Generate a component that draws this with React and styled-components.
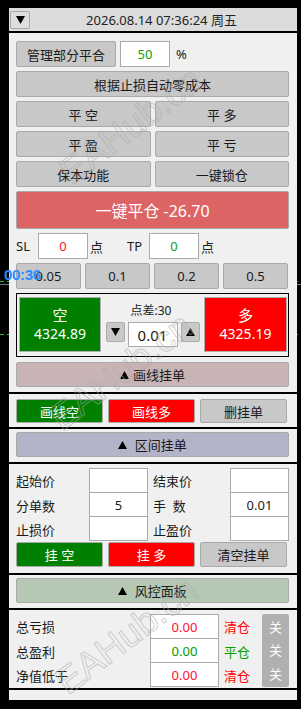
import React from 'react';
import styled, { createGlobalStyle } from 'styled-components';

const GlobalStyle = createGlobalStyle`
  html, body { margin: 0; padding: 0; background: #000; }
  body { font-family: "Noto Sans", "Noto Sans CJK SC", sans-serif; }
  * { box-sizing: border-box; }
`;

const FONT = `"Noto Sans", "Noto Sans CJK SC", sans-serif`;

const Page = styled.div`
  position: relative;
  width: 301px;
  height: 709px;
  background: #000;
  padding: 8px 0 0 9px;
  overflow: hidden;
`;

const ChartLine = styled.div`
  position: absolute;
  left: 0;
  right: 0;
  top: ${p => p.$top}px;
  height: 1px;
  background: ${p => p.$dashed
    ? `repeating-linear-gradient(90deg, ${p.$color} 0 4px, transparent 4px 7px)`
    : p.$color};
`;

const TimeTag = styled.div`
  position: absolute;
  left: 4px;
  top: 266px;
  z-index: 5;
  font-family: "Liberation Sans", sans-serif;
  font-weight: bold;
  font-size: 15px;
  color: #2a8cff;
  letter-spacing: -0.3px;
`;

const Panel = styled.div`
  position: relative;
  z-index: 1;
  width: 288px;
  display: flex;
  flex-direction: column;
  font-family: ${FONT};
  font-size: 13px;
  color: #1a1a1a;
`;

const Header = styled.div`
  height: 23px;
  background: #dcdcdc;
  display: flex;
  align-items: center;
  padding-left: 1px;
`;

const Toggle = styled.div`
  width: 20px;
  height: 18px;
  border: 1px solid #a9a9a9;
  border-radius: 2px;
  background: #dedede;
  display: flex;
  align-items: center;
  justify-content: center;
`;

const DateText = styled.div`
  flex: 1;
  text-align: center;
  font-size: 13px;
  padding-right: 4px;
  color: #222;
`;

const Rule = styled.div`
  height: 2px;
  background: #000;
`;

const Section = styled.div`
  background: #f0f0f0;
  padding: ${p => p.$pad};
  display: flex;
  flex-direction: column;
  gap: ${p => p.$gap || 0}px;
  height: ${p => (p.$h ? `${p.$h}px` : 'auto')};
`;

const TONES = {
  gray: { bg: '#c8c8c8', fg: '#1a1a1a', bd: '#a9a9a9' },
  green: { bg: '#008000', fg: '#fff', bd: '#a9a9a9' },
  red: { bg: '#ff0000', fg: '#fff', bd: '#a9a9a9' },
  rose: { bg: '#dc6464', fg: '#fff', bd: '#a9a9a9' },
  pink: { bg: '#c8b4b4', fg: '#1a1a1a', bd: '#a9a9a9' },
  lilac: { bg: '#b4b4c8', fg: '#1a1a1a', bd: '#a9a9a9' },
  sage: { bg: '#b4c8b4', fg: '#1a1a1a', bd: '#a9a9a9' },
};

const Btn = styled.div`
  height: ${p => p.$h || 26}px;
  width: ${p => (p.$w ? `${p.$w}px` : 'auto')};
  background: ${p => TONES[p.$tone || 'gray'].bg};
  color: ${p => TONES[p.$tone || 'gray'].fg};
  border: 1px solid ${p => TONES[p.$tone || 'gray'].bd};
  border-radius: 2px;
  font-size: ${p => p.$fs || 13}px;
  display: flex;
  align-items: center;
  justify-content: center;
  gap: 4px;
  white-space: pre;
  flex-shrink: 0;
`;

const Row = styled.div`
  display: flex;
  align-items: center;
  gap: ${p => p.$gap || 0}px;
  margin-top: ${p => p.$mt || 0}px;
`;

const Grid = styled.div`
  display: grid;
  grid-template-columns: ${p => p.$cols};
  column-gap: ${p => p.$gap || 0}px;
  margin-top: ${p => p.$mt || 0}px;
`;

const Field = styled.div`
  width: ${p => p.$w}px;
  height: ${p => p.$h || 26}px;
  background: #fff;
  border: 1px solid #ababab;
  display: flex;
  align-items: center;
  justify-content: center;
  color: ${p => p.$color || '#1a1a1a'};
  font-size: ${p => p.$fs || 13}px;
  flex-shrink: 0;
`;

const Label = styled.span`
  width: ${p => (p.$w ? `${p.$w}px` : 'auto')};
  margin-left: ${p => p.$ml || 0}px;
  flex-shrink: 0;
  white-space: pre;
`;

const TradeBox = styled.div`
  height: 64px;
  border: 1px solid #000;
  padding: 3px 1px 3px 2px;
  display: flex;
  align-items: stretch;
`;

const PriceBox = styled.div`
  width: ${p => p.$w}px;
  height: 55px;
  background: ${p => (p.$side === 'sell' ? '#008000' : '#ff0000')};
  border: 1px solid #b0b0b0;
  color: #fff;
  display: flex;
  flex-direction: column;
  align-items: center;
  justify-content: center;
  gap: 1px;
`;

const Side = styled.span`
  font-size: 15px;
  line-height: 18px;
`;

const Price = styled.span`
  font-size: 14px;
  line-height: 18px;
`;

const Middle = styled.div`
  flex: 1;
  display: flex;
  flex-direction: column;
  align-items: center;
  padding-top: 6px;
  gap: 3px;
`;

const Spread = styled.div`
  font-size: 12px;
  line-height: 16px;
  padding-right: 3px;
`;

const Stepper = styled.div`
  display: flex;
  align-items: flex-start;
  gap: 3px;
`;

const StepBtn = styled.div`
  width: 19px;
  height: 20px;
  background: #c8c8c8;
  border: 1px solid #ababab;
  border-radius: 2px;
  display: flex;
  align-items: center;
  justify-content: center;
`;

const GridCell = styled.div`
  height: ${p => (p.$first ? 25 : 24)}px;
  display: flex;
  align-items: center;
  padding-left: ${p => p.$pl || 0}px;
  white-space: pre;
`;

const GridField = styled.div`
  height: ${p => (p.$first ? 25 : 24)}px;
  background: #fff;
  border: 1px solid #ababab;
  border-top-width: ${p => (p.$first ? 1 : 0)}px;
  display: flex;
  align-items: center;
  justify-content: center;
  color: ${p => p.$color || '#1a1a1a'};
`;

const Status = styled.div`
  height: ${p => (p.$first ? 25 : 24)}px;
  display: flex;
  align-items: center;
  padding-left: 5px;
  color: ${p => p.$color};
`;

const OffBox = styled.div`
  grid-column: 4;
  grid-row: 1 / span 3;
  background: #b0b0b0;
  border-radius: 2px;
  color: #fff;
  display: flex;
  flex-direction: column;
  justify-content: space-around;
  align-items: center;
  padding: 1px 0 2px;
`;

const Watermark = styled.div`
  position: absolute;
  left: ${p => p.$x}px;
  top: ${p => p.$y}px;
  transform: translate(-50%, -50%) rotate(-37deg);
  font-family: "Liberation Sans", sans-serif;
  font-size: 37px;
  color: transparent;
  -webkit-text-stroke: 1px rgba(170, 170, 170, 0.55);
  pointer-events: none;
  white-space: nowrap;
  z-index: 3;
`;

const Tri = ({ up, size = 9 }) => (
  <svg width={size} height={size - 1} viewBox="0 0 9 8">
    {up ? <path d="M4.5 0 L9 8 L0 8 Z" fill="#000" /> : <path d="M0 0 L9 0 L4.5 8 Z" fill="#000" />}
  </svg>
);

const risk = [
  { label: '总亏损', val: '#ff1030', st: '清仓', stc: '#ff0000' },
  { label: '总盈利', val: '#00a000', st: '平仓', stc: '#00a000' },
  { label: '净值低于', val: '#ff1030', st: '清仓', stc: '#ff0000' },
];

export default function App() {
  return (
    <Page>
      <GlobalStyle />
      <ChartLine $top={281} $color="#22c022" $dashed />
      <ChartLine $top={284} $color="#6a7c8c" />
      <ChartLine $top={334} $color="#22c022" $dashed />
      <TimeTag>00:36</TimeTag>
      <Panel>
        <Watermark $x={122} $y={118}>EAHub.cn</Watermark>
        <Watermark $x={112} $y={364}>EAHub.cn</Watermark>
        <Watermark $x={118} $y={628}>EAHub.cn</Watermark>
        <Header>
          <Toggle><Tri /></Toggle>
          <DateText>2026.08.14 07:36:24 周五</DateText>
        </Header>
        <Rule />
        <Section $pad="8px 8px 5px 7px" $gap={4}>
          <Row>
            <Btn $w={100}>管理部分平合</Btn>
            <Field $w={50} $color="#10a010" style={{ marginLeft: 4 }}>50</Field>
            <Label $ml={6}>%</Label>
          </Row>
          <Btn>根据止损自动零成本</Btn>
          <Grid $cols="1fr 1fr" $gap={4}>
            <Btn>{'平 空'}</Btn>
            <Btn>{'平 多'}</Btn>
          </Grid>
          <Grid $cols="1fr 1fr" $gap={4}>
            <Btn>{'平 盈'}</Btn>
            <Btn>{'平 亏'}</Btn>
          </Grid>
          <Grid $cols="1fr 1fr" $gap={4}>
            <Btn>保本功能</Btn>
            <Btn>一键锁仓</Btn>
          </Grid>
          <Btn $tone="rose" $h={38} $fs={16}>一键平仓 -26.70</Btn>
          <Row>
            <Label $w={22}>SL</Label>
            <Field $w={50} $color="#ff1030">0</Field>
            <Label $ml={2}>点</Label>
            <Label $ml={24} $w={22}>TP</Label>
            <Field $w={50} $color="#10a010">0</Field>
            <Label $ml={2}>点</Label>
          </Row>
          <Grid $cols="repeat(4, 65px)" $gap={4}>
            <Btn>0.05</Btn>
            <Btn>0.1</Btn>
            <Btn>0.2</Btn>
            <Btn>0.5</Btn>
          </Grid>
          <TradeBox>
            <PriceBox $side="sell" $w={82}>
              <Side>空</Side>
              <Price>4324.89</Price>
            </PriceBox>
            <Middle>
              <Spread>点差:30</Spread>
              <Stepper>
                <StepBtn><Tri /></StepBtn>
                <Field $w={50} $h={25} $fs={15}>0.01</Field>
                <StepBtn><Tri up /></StepBtn>
              </Stepper>
            </Middle>
            <PriceBox $side="buy" $w={83}>
              <Side>多</Side>
              <Price>4325.19</Price>
            </PriceBox>
          </TradeBox>
          <Btn $tone="pink" $h={25} style={{ marginTop: 1 }}><Tri up />画线挂单</Btn>
        </Section>
        <Rule />
        <Section $pad="5px 10px 4px 7px">
          <Grid $cols="87px 87px 87px" $gap={5}>
            <Btn $tone="green" $h={24}>画线空</Btn>
            <Btn $tone="red" $h={24}>画线多</Btn>
            <Btn $h={24}>删挂单</Btn>
          </Grid>
        </Section>
        <Rule />
        <Section $pad="3px 8px 5px 7px">
          <Btn $tone="lilac" $h={25}><Tri up /> 区间挂单</Btn>
        </Section>
        <Rule />
        <Section $pad="4px 8px 6px 7px">
          <Grid $cols="73px 59px 82px 59px">
            <GridCell $first>起始价</GridCell>
            <GridField $first />
            <GridCell $first $pl={5}>结束价</GridCell>
            <GridField $first />
            <GridCell>分单数</GridCell>
            <GridField>5</GridField>
            <GridCell $pl={5}>{'手  数'}</GridCell>
            <GridField>0.01</GridField>
            <GridCell>止损价</GridCell>
            <GridField />
            <GridCell $pl={5}>止盈价</GridCell>
            <GridField />
          </Grid>
          <Grid $cols="87px 87px 87px" $gap={5} $mt={1}>
            <Btn $tone="green" $h={25}>{'挂 空'}</Btn>
            <Btn $tone="red" $h={25}>{'挂 多'}</Btn>
            <Btn $h={25}>清空挂单</Btn>
          </Grid>
        </Section>
        <Rule />
        <Section $pad="3px 8px 5px 7px">
          <Btn $tone="sage" $h={25}><Tri up /> 风控面板</Btn>
        </Section>
        <Rule />
        <Section $pad="4px 7px 1px 7px">
          <Grid $cols="134px 69px 43px 27px">
            {risk.map((r, i) => (
              <React.Fragment key={r.label}>
                <GridCell $first={i === 0} style={{ gridColumn: 1, gridRow: i + 1 }}>{r.label}</GridCell>
                <GridField $first={i === 0} $color={r.val} style={{ gridColumn: 2, gridRow: i + 1 }}>0.00</GridField>
                <Status $first={i === 0} $color={r.stc} style={{ gridColumn: 3, gridRow: i + 1 }}>{r.st}</Status>
              </React.Fragment>
            ))}
            <OffBox>
              <span>关</span>
              <span>关</span>
              <span>关</span>
            </OffBox>
          </Grid>
        </Section>
        <Rule />
        <Section $h={10} />
      </Panel>
    </Page>
  );
}
